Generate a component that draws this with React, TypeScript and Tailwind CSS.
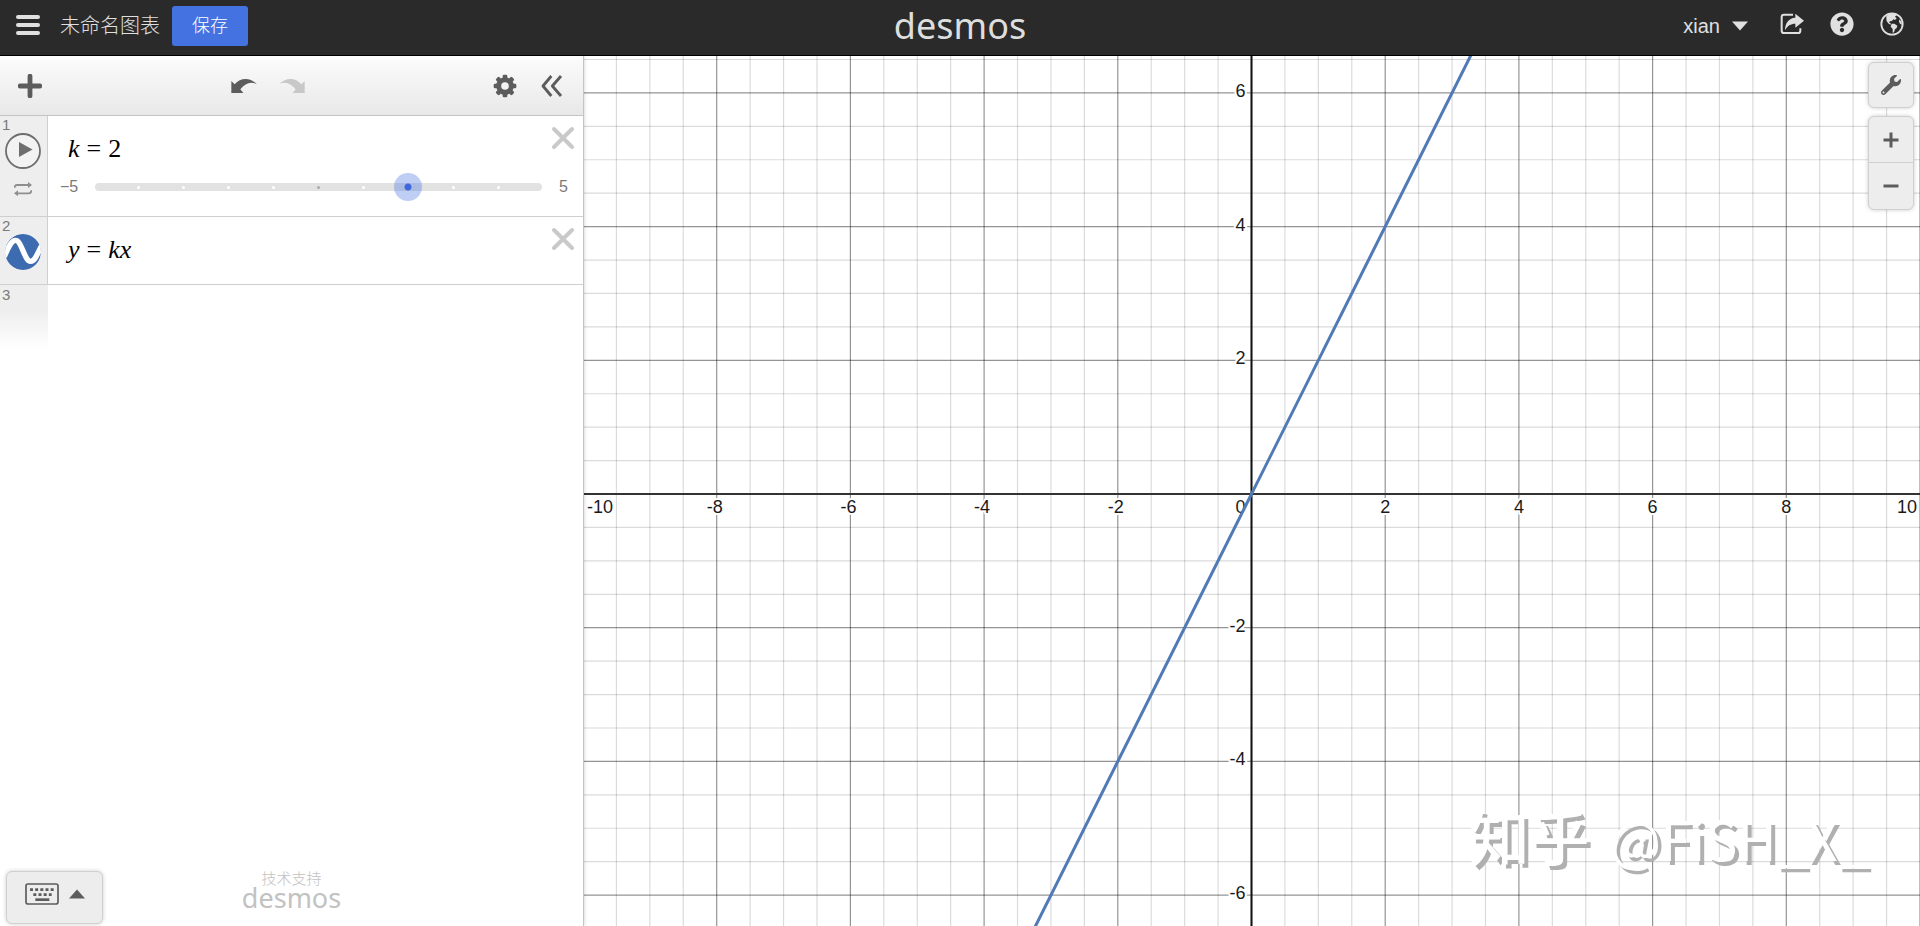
import { useLayoutEffect, useRef, useState, type ReactNode } from 'react'
import { FaQuestionCircle, FaWrench } from 'react-icons/fa'

const range = (from: number, to: number) => Array.from({ length: to - from + 1 }, (_, i) => from + i)

function GlobeIcon() {
  return (
    <svg viewBox="0 0 72 72" className="h-6 w-6" aria-hidden="true">
      <circle cx="36" cy="36" r="32" fill="none" stroke="currentColor" strokeWidth="5.5" />
      <path
        fill="currentColor"
        d="M19 12 L30 5 L45 5 L50 10 L45 14 L50 19 L45 24 L40 22 L36 27 L30 28 L27 31 L33 35 L32 38 L26 35 L20 28 L19 20 Z"
      />
      <path fill="currentColor" d="M35 35 L43 35 L52 41 L50 48 L45 52 L42 61 L38 62 L38 51 L32 44 Z" />
      <path fill="currentColor" d="M58 22 L64 29 L66 38 L60 35 L57 29 Z" />
    </svg>
  )
}

function ShareIcon() {
  return (
    <svg viewBox="0 0 72 72" className="h-6 w-6" aria-hidden="true">
      <path
        d="M39 8 H12 Q5 8 5 15 V56 Q5 63 12 63 H54 Q61 63 61 56 V49"
        fill="none"
        stroke="currentColor"
        strokeWidth="6"
      />
      <path fill="currentColor" d="M46 5 L72 26 L46 47 V35 C32 35 22 41 15 55 C15 35 25 18 46 17 Z" />
    </svg>
  )
}

function UndoIcon() {
  return (
    <svg viewBox="0 0 78 48" className="h-4 w-[26px]" aria-hidden="true">
      <path fill="currentColor" d="M1 9 L11 19 C28 -1 56 -3 77 18 C58 9 43 16 28 34 L37 45 H1 Z" />
    </svg>
  )
}

function GearIcon() {
  return (
    <svg viewBox="-36 -36 72 72" className="h-6 w-6" aria-hidden="true">
      <circle r="19" fill="none" stroke="currentColor" strokeWidth="15" />
      {range(0, 7).map((i) => (
        <rect key={i} x="-7" y="-34" width="14" height="13" rx="4" fill="currentColor" transform={`rotate(${i * 45})`} />
      ))}
    </svg>
  )
}

function Plus({ className }: { className: string }) {
  return (
    <svg viewBox="0 0 22 22" className={className} fill="none" stroke="currentColor" aria-hidden="true">
      <path d="M11 2 V20 M2 11 H20" strokeWidth="4.4" strokeLinecap="round" />
    </svg>
  )
}

function Header() {
  return (
    <header className="grid h-14 shrink-0 grid-cols-[1fr_auto_1fr] items-center border-b border-black bg-[#2a2a2a] pb-1 font-['Liberation_Sans','Noto_Sans_CJK_SC',sans-serif] text-[#e0e0e0]">
      <div className="flex items-center pl-4">
        <button type="button" aria-label="菜单" className="mr-5">
          <svg viewBox="0 0 24 22" className="h-[22px] w-6" fill="none" stroke="currentColor" aria-hidden="true">
            <path d="M2 2 H22 M2 10 H22 M2 18 H22" strokeWidth="4" strokeLinecap="round" />
          </svg>
        </button>
        <button type="button" className="mr-3 text-xl font-light">
          未命名图表
        </button>
        <button type="button" className="h-10 rounded-[3px] bg-[#4472e0] px-5 text-lg font-light text-white">
          保存
        </button>
      </div>
      <a
        href="#home"
        className="font-['Noto_Sans',sans-serif] text-4xl leading-10 text-[#dedede]"
      >
        desmos
      </a>
      <div className="flex items-center justify-end pr-4">
        <button type="button" className="mr-8 flex items-center gap-3 text-xl">
          xian
          <svg viewBox="0 0 16 10" className="h-2.5 w-4" fill="currentColor" aria-hidden="true">
            <path d="M0 0.5 H16 L8 9.5 Z" />
          </svg>
        </button>
        <div className="flex items-center gap-[26px] pb-1">
          <button type="button" aria-label="分享">
            <ShareIcon />
          </button>
          <button type="button" aria-label="帮助">
            <FaQuestionCircle className="h-6 w-6" />
          </button>
          <button type="button" aria-label="语言">
            <GlobeIcon />
          </button>
        </div>
      </div>
    </header>
  )
}

function Toolbar() {
  return (
    <div className="flex h-[60px] shrink-0 items-center border-b border-[#c4c4c4] bg-linear-to-b from-[#fcfcfc] to-[#e8e8e8] pr-5 pl-[18px] text-[#5c5c5c]">
      <button type="button" aria-label="添加">
        <Plus className="h-6 w-6" />
      </button>
      <div className="flex flex-1 justify-center gap-[22px]">
        <button type="button" aria-label="撤销">
          <UndoIcon />
        </button>
        <button type="button" aria-label="重做" disabled className="-scale-x-100 text-[#c8c8c8]">
          <UndoIcon />
        </button>
      </div>
      <div className="flex gap-6">
        <button type="button" aria-label="设置">
          <GearIcon />
        </button>
        <button type="button" aria-label="收起">
          <svg viewBox="0 0 66 66" className="h-[22px] w-[22px]" fill="none" stroke="currentColor" aria-hidden="true">
            <path d="M31 3 L6 33 L31 63 M60 3 L34 33 L60 63" strokeWidth="8.5" strokeLinejoin="round" />
          </svg>
        </button>
      </div>
    </div>
  )
}

function Expression({ index, icon, math, children }: { index: number; icon: ReactNode; math: ReactNode; children?: ReactNode }) {
  return (
    <li className="flex border-b border-[#cfcfcf]">
      <div className="flex w-12 shrink-0 flex-col items-center border-r border-[#cfcfcf] bg-[#eeeeee] pt-px pr-0.5 text-[#7a7a7a]">
        <span className="self-start pl-0.5 text-[15px] leading-4">{index}</span>
        {icon}
      </div>
      <div className="min-w-0 flex-1 pt-2.5">
        <div className="flex items-start pr-2 pl-5">
          <div className="flex-1 pt-1.5 font-['Liberation_Serif',serif] text-[26px] leading-[34px] text-black">{math}</div>
          <button type="button" aria-label="删除" className="text-[#c9c9c9]">
            <svg viewBox="0 0 24 24" className="h-6 w-6" fill="none" stroke="currentColor" aria-hidden="true">
              <path d="M3 3 L21 21 M21 3 L3 21" strokeWidth="4" strokeLinecap="round" />
            </svg>
          </button>
        </div>
        {children}
      </div>
    </li>
  )
}

function Slider({ value, onChange }: { value: number; onChange: (v: number) => void }) {
  return (
    <div className="mt-[7px] mb-[15px] flex h-7 items-center text-base text-[#7a7a7a]">
      <span className="w-[47px] pl-3">−5</span>
      <div className="relative h-2 flex-1 rounded-full bg-[#e2e2e2]">
        <div className="flex h-full items-center justify-evenly">
          {range(-4, 4).map((n) => (
            <span key={n} className={n === 0 ? 'h-[3px] w-[3px] rounded-full bg-[#aaaaaa]' : 'h-[3px] w-[3px] rounded-full bg-white'} />
          ))}
        </div>
        <input
          type="range"
          aria-label="k"
          min={-5}
          max={5}
          step={0.1}
          value={value}
          onChange={(e) => onChange(Number(e.target.value))}
          className="absolute inset-y-0 -left-3.5 w-[calc(100%+28px)] cursor-pointer appearance-none bg-transparent [&::-webkit-slider-thumb]:h-7 [&::-webkit-slider-thumb]:w-7 [&::-webkit-slider-thumb]:appearance-none [&::-webkit-slider-thumb]:rounded-full [&::-webkit-slider-thumb]:bg-[radial-gradient(circle,#4067dc_3px,rgb(68_114_224_/_0.35)_4px)]"
        />
      </div>
      <span className="w-[41px] pl-[17px]">5</span>
    </div>
  )
}

function PlayIcon() {
  return (
    <>
      <button type="button" aria-label="播放">
        <svg viewBox="0 0 36 36" className="block h-9 w-9" aria-hidden="true">
          <circle cx="18" cy="18" r="17" fill="#f2f2f2" stroke="#6e6e6e" strokeWidth="1.8" />
          <path d="M14 9 L27.5 16.5 L14 24 Z" fill="#6e6e6e" />
        </svg>
      </button>
      <button type="button" aria-label="循环模式" className="mt-3">
        <svg viewBox="0 0 54 48" className="block h-4 w-[18px] text-[#8e8e8e]" fill="none" stroke="currentColor" aria-hidden="true">
          <path d="M2 20 Q2 12 9 12 H44 M52 28 Q52 37 45 37 H10" strokeWidth="5.5" />
          <path d="M42 3 L54 12 L42 21 Z M12 28 L0 37 L12 46 Z" fill="currentColor" stroke="none" />
        </svg>
      </button>
    </>
  )
}

function CurveIcon() {
  return (
    <button type="button" aria-label="显示或隐藏">
      <svg viewBox="0 0 108 108" className="block h-9 w-9 overflow-hidden rounded-full" aria-hidden="true">
        <circle cx="54" cy="54" r="54" fill="#3d6bb0" />
        <path d="M-2 68 C12 34 20 19 32 19 C50 19 58 82 77 82 C90 82 96 62 110 34" fill="none" stroke="#fff" strokeWidth="16" />
      </svg>
    </button>
  )
}

function Equals() {
  return <span className="mx-[7px] inline-block not-italic">=</span>
}

function Graph({ k }: { k: number }) {
  const ref = useRef<HTMLDivElement>(null)
  const [size, setSize] = useState({ w: 0, h: 0 })

  useLayoutEffect(() => {
    const el = ref.current
    if (!el) return
    const measure = () => setSize({ w: el.clientWidth, h: el.clientHeight })
    measure()
    const observer = new ResizeObserver(measure)
    observer.observe(el)
    return () => observer.disconnect()
  }, [])

  const { w, h } = size
  const unit = w / 20
  const ox = w / 2
  const oy = h / 2 + 3
  const px = (x: number) => ox + x * unit
  const py = (y: number) => oy - y * unit
  const rows = unit ? Math.ceil(h / unit) : 0
  const labelX = (n: number) => (n === -10 ? 4 : n === 10 ? w - 3 : px(n) - (n < 0 ? 2 : 0))

  return (
    <div ref={ref} className="absolute inset-0 overflow-hidden bg-white">
      <svg className="block h-full w-full" role="img" aria-label="y = kx">
        {range(-20, 20).map((i) => (
          <line key={i} x1={px(i / 2)} x2={px(i / 2)} y1={0} y2={h} stroke="#000" strokeOpacity={i % 4 ? 0.14 : 0.42} strokeWidth={1.2} />
        ))}
        {range(-rows, rows).map((i) => (
          <line key={i} x1={0} x2={w} y1={py(i / 2)} y2={py(i / 2)} stroke="#000" strokeOpacity={i % 4 ? 0.14 : 0.42} strokeWidth={1.2} />
        ))}
        <line x1={0} x2={w} y1={oy} y2={oy} stroke="#333" strokeWidth={2} />
        <line x1={ox} x2={ox} y1={0} y2={h} stroke="#111" strokeWidth={2} />
        <g
          fill="#1a1a1a"
          stroke="#fff"
          strokeWidth={4}
          strokeLinejoin="round"
          className="font-['Liberation_Sans',sans-serif] text-lg [paint-order:stroke]"
        >
          {range(-5, 5)
            .filter((i) => i !== 0)
            .map((i) => (
              <text key={i} x={labelX(i * 2)} y={oy + 19} textAnchor={i === -5 ? 'start' : i === 5 ? 'end' : 'middle'}>
                {i * 2}
              </text>
            ))}
          {range(-3, 3)
            .filter((i) => i !== 0)
            .map((i) => (
              <text key={i} x={ox - 6} y={py(i * 2) + 4} textAnchor="end">
                {i * 2}
              </text>
            ))}
          <text x={ox - 6} y={oy + 19} textAnchor="end">
            0
          </text>
        </g>
        <line x1={px(-10)} y1={py(-10 * k)} x2={px(10)} y2={py(10 * k)} stroke="#4f7ab6" strokeWidth={3} />
      </svg>
    </div>
  )
}

export default function App() {
  const [k, setK] = useState(2)

  return (
    <div className="flex h-screen flex-col bg-white font-['Liberation_Sans','Noto_Sans_CJK_SC',sans-serif]">
      <Header />
      <main className="flex min-h-0 flex-1">
        {/* Expression list */}
        <section className="relative z-10 flex w-[584px] shrink-0 flex-col border-r border-[#c4c4c4] bg-white shadow-[0_0_4px_rgba(0,0,0,0.2)]">
          <Toolbar />
          <ol className="flex-1">
            <Expression
              index={1}
              icon={<PlayIcon />}
              math={
                <>
                  <i>k</i>
                  <Equals />
                  {k}
                </>
              }
            >
              <Slider value={k} onChange={setK} />
            </Expression>
            <Expression
              index={2}
              icon={<CurveIcon />}
              math={
                <i>
                  y<Equals />
                  kx
                </i>
              }
            >
              <div className="h-[17px]" />
            </Expression>
            <li className="flex">
              <div className="h-16 w-12 bg-linear-to-b from-[#eeeeee] from-40% to-white pl-0.5 text-[15px] leading-5 text-[#7a7a7a]">3</div>
            </li>
          </ol>
          <footer className="grid grid-cols-[97px_1fr_97px] items-end px-1.5 pb-0.5">
            <button
              type="button"
              aria-label="键盘"
              className="flex h-[53px] items-center justify-center gap-2.5 rounded-md border border-[#d0d0d0] bg-[#ededed] pb-2 text-[#5c5c5c] shadow-[0_0_4px_rgba(0,0,0,0.2)]"
            >
              <svg viewBox="0 0 102 66" className="h-[22px] w-[34px]" aria-hidden="true">
                <rect x="3" y="3" width="96" height="60" rx="6" fill="none" stroke="currentColor" strokeWidth="5" />
                <path
                  d="M15 20 H89 M25 35 H80"
                  fill="none"
                  stroke="currentColor"
                  strokeWidth="8"
                  strokeDasharray="9 6.5"
                />
                <path d="M31 50 H73" stroke="currentColor" strokeWidth="8" />
              </svg>
              <svg viewBox="0 0 16 10" className="h-2.5 w-4" fill="currentColor" aria-hidden="true">
                <path d="M0 9.5 H16 L8 0.5 Z" />
              </svg>
            </button>
            <a href="#about" className="flex flex-col items-center pb-[15px] text-[#c2c2c2]">
              <span className="text-[15px] leading-4 font-light">技术支持</span>
              <span className="font-['Noto_Sans',sans-serif] text-[27px] leading-[22px]">desmos</span>
            </a>
          </footer>
        </section>

        {/* Graph paper */}
        <section className="relative -ml-px flex-1">
          <Graph k={k} />
          <div className="absolute top-1.5 right-1.5 flex flex-col gap-2 text-[#5c5c5c]">
            <button
              type="button"
              aria-label="图表设置"
              className="flex h-[46px] w-[46px] items-center justify-center rounded-md border border-[#d0d0d0] bg-[#ededed] shadow-[0_0_4px_rgba(0,0,0,0.2)]"
            >
              <FaWrench className="h-5 w-5" />
            </button>
            <div className="flex w-[46px] flex-col rounded-md border border-[#d0d0d0] bg-[#ededed] shadow-[0_0_4px_rgba(0,0,0,0.2)]">
              <button type="button" aria-label="放大" className="flex h-[46px] items-center justify-center border-b border-[#d0d0d0]">
                <svg viewBox="0 0 16 16" className="h-4 w-4" fill="none" stroke="currentColor" aria-hidden="true">
                  <path d="M8 0.5 V15.5 M0.5 8 H15.5" strokeWidth="3" />
                </svg>
              </button>
              <button type="button" aria-label="缩小" className="flex h-[46px] items-center justify-center">
                <svg viewBox="0 0 16 16" className="h-4 w-4" fill="none" stroke="currentColor" aria-hidden="true">
                  <path d="M0.5 8 H15.5" strokeWidth="3" />
                </svg>
              </button>
            </div>
          </div>
          <p className="pointer-events-none absolute right-[52px] bottom-[52px] flex items-baseline gap-5 font-['Noto_Sans_CJK_SC',sans-serif] text-[54px] leading-[72px] whitespace-nowrap text-white [text-shadow:4px_4px_0_#b0b0b0]">
            <span className="text-[60px] font-medium">知乎</span>
            <span>@FiSH_X_</span>
          </p>
        </section>
      </main>
    </div>
  )
}
